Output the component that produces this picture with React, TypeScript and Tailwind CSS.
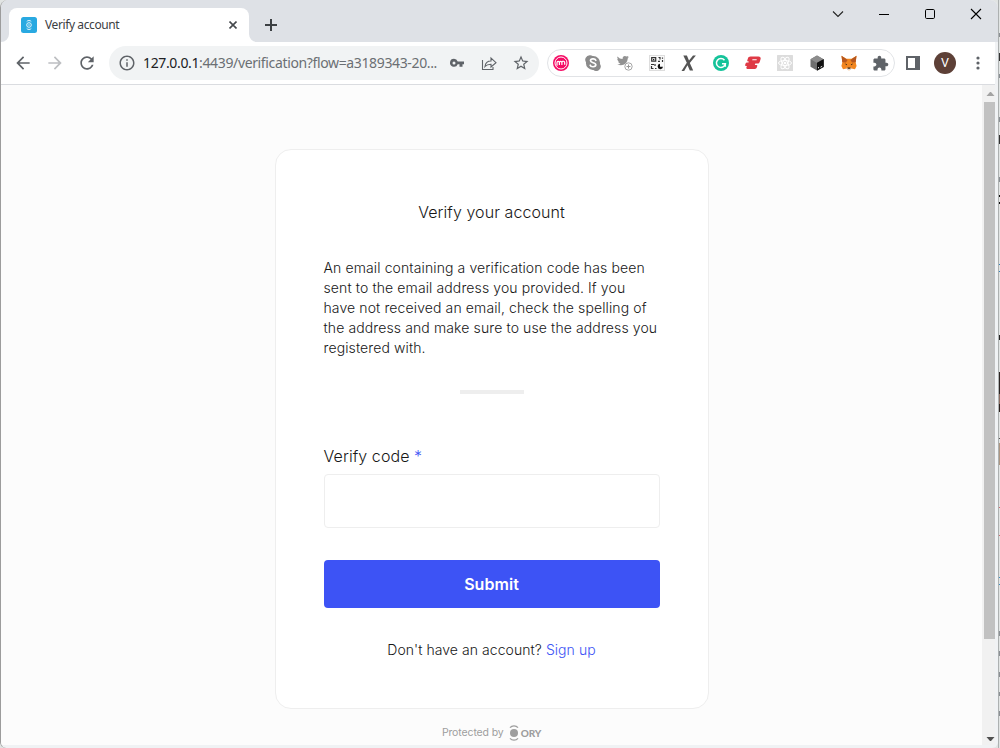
import React from "react";

const ui = "font-['Noto_Sans','Open_Sans',sans-serif]";

function Favicon() {
  return (
    <svg width="16" height="16" viewBox="0 0 16 16" className="shrink-0">
      <rect width="16" height="16" rx="2.5" fill="#29a9e1" />
      <g fill="none" stroke="#fff" strokeWidth="1" opacity=".9">
        <circle cx="8" cy="8" r="2.3" />
        <circle cx="8" cy="8" r="0.5" strokeWidth="0.6" />
        <path d="M5.700 4.600a2.600 2 0 0 1 4.600 0M5.700 11.400a2.600 2 0 0 0 4.600 0" />
      </g>
    </svg>
  );
}

function TitleBar() {
  return (
    <div className="flex h-[42px] shrink-0 bg-[#dee1e6] pl-2">
      <div className="flex w-60 flex-col pt-2">
        <div className="relative flex h-[34px] items-center rounded-t-lg bg-white pl-3">
          <svg width="8" height="8" viewBox="0 0 8 8" className="absolute -left-2 bottom-0">
            <path d="M8 0v8H0a8 8 0 0 0 8-8z" fill="#fff" />
          </svg>
          <svg width="8" height="8" viewBox="0 0 8 8" className="absolute -right-2 bottom-0">
            <path d="M0 0v8h8a8 8 0 0 1-8-8z" fill="#fff" />
          </svg>
          <Favicon />
          <span className={`${ui} ml-2 w-[180px] text-[12px] leading-4 tracking-[-0.4px] text-[#3c4043]`}>
            Verify account
          </span>
          <svg width="8" height="8" viewBox="0 0 8 8" className="ml-1">
            <path d="M0.500 0.500l7 7M7.500 0.500l-7 7" stroke="#45494d" strokeWidth="1.600" />
          </svg>
        </div>
      </div>
      <div className="flex flex-1 pt-[19px] pl-4">
        <svg width="12" height="12" viewBox="0 0 12 12">
          <path d="M6 0v12M0 6h12" stroke="#3c4043" strokeWidth="2" />
        </svg>
      </div>
      <div className="flex gap-[34px] pt-2 pr-4">
        <svg width="12" height="12" viewBox="0 0 12 12" fill="none" stroke="#222" strokeWidth="1.100">
          <path d="M1 3.500l5 5 5-5" />
        </svg>
        <svg width="12" height="12" viewBox="0 0 12 12" shapeRendering="crispEdges">
          <path d="M1 6.500h10" stroke="#000" />
        </svg>
        <svg width="12" height="12" viewBox="0 0 12 12" fill="none" stroke="#000">
          <rect x="1.500" y="1.500" width="9" height="9" rx="1.200" />
        </svg>
        <svg width="12" height="12" viewBox="0 0 12 12" stroke="#000" strokeWidth="1.100">
          <path d="M1 1l10 10M11 1L1 11" />
        </svg>
      </div>
    </div>
  );
}

function MIcon({ d, color = "#5f6368", size = 20 }: { d: string; color?: string; size?: number }) {
  return (
    <svg width={size} height={size} viewBox="0 0 24 24" fill={color} className="shrink-0">
      <path d={d} />
    </svg>
  );
}

function AddressBar() {
  return (
    <div className="flex h-[34px] w-[430px] items-center rounded-full bg-[#f1f3f4] pl-[9px]">
      <MIcon
        size={18}
        d="M11 7h2v2h-2zm0 4h2v6h-2zm1-9C6.480 2 2 6.480 2 12s4.480 10 10 10 10-4.480 10-10S17.520 2 12 2zm0 18c-4.410 0-8-3.590-8-8s3.590-8 8-8 8 3.590 8 8-3.590 8-8 8z"
      />
      <span className={`${ui} ml-[7px] w-[304px] whitespace-nowrap text-[14px] leading-5 tracking-[-0.36px] text-[#6b6f73]`}>
        <span className="text-[#202124]">127.0.0.1</span>
        :4439/verification?flow=a3189343-20...
      </span>
      <svg width="16" height="16" viewBox="0 0 16 16" fill="#5f6368" className="mt-[-1px] ml-[2px] shrink-0">
        <path fillRule="evenodd" d="M5 3.800a4 4 0 1 0 3.700 5.500H10.500v2.400h3V9.300H15V6.500H8.700A4 4 0 0 0 5 3.800zm0 2.600a1.500 1.500 0 1 1 0 3 1.500 1.500 0 0 1 0-3z" />
      </svg>
      <svg width="16" height="16" viewBox="0 0 16 16" fill="none" stroke="#5f6368" className="ml-4 shrink-0">
        <path d="M1.500 5v9.500h10.500V12M4 11.500c.5-4 2.500-5.500 6-5.500V3l5 4.700-5 4.300V9.200c-3 0-4.700.7-6 2.300z" strokeWidth="1.100" />
      </svg>
      <div className="ml-[15px]">
        <MIcon
          size={18}
          d="M22 9.240l-7.190-.62L12 2 9.190 8.630 2 9.240l5.460 4.730L5.820 21 12 17.270 18.180 21l-1.630-7.030L22 9.240zM12 15.400l-3.760 2.270 1-4.280-3.320-2.880 4.380-.38L12 6.100l1.710 4.040 4.380.38-3.320 2.880 1 4.280L12 15.400z"
        />
      </div>
    </div>
  );
}

function Extensions() {
  return (
    <div className="flex h-7 w-[348px] items-center gap-4 rounded-full border border-[#e1e3e6] pl-[5px]">
      <svg width="16" height="16" viewBox="0 0 16 16" className="shrink-0">
        <circle cx="8" cy="8" r="8" fill="#f50b64" />
        <circle cx="8" cy="8" r="6" fill="none" stroke="#fff" strokeWidth="1" />
        <path d="M4 10.800V7.800c0-2 2.400-2 2.400 0V10M6.400 7.800c0-2 2.500-2 2.500 0V10M8.900 7.800c0-2.200 2.800-2 2.800 0v2" fill="none" stroke="#fff" strokeWidth="1.200" />
      </svg>
      <svg width="16" height="16" viewBox="0 0 16 16" className="shrink-0">
        <path d="M4.600 0.200a4.500 4.500 0 0 1 3.100.8A7 7 0 0 1 15 9a4.500 4.500 0 0 1-6.500 6A7 7 0 0 1 1 7.200 4.500 4.500 0 0 1 4.600.2z" fill="#8b8b8b" />
        <path d="M10.800 5.300C10 3.300 5.500 3.500 5.500 5.800c0 2.400 5.300 1.500 5.300 4 0 2.500-5 2.500-5.600.4" fill="none" stroke="#fff" strokeWidth="1.700" strokeLinecap="round" />
      </svg>
      <svg width="16" height="16" viewBox="0 0 16 16" className="shrink-0">
        <path d="M.5 1.500C2 3.200 3.500 4 5.600 4 5.300 1 8 .2 9.600 1.600l1.900-.6-.8 1.500 1.200-.2-1.200 1.300C10.500 9 5 12 .2 9.300c1.400.1 2.500-.2 3.300-.9C2.200 8.200 1.400 7.400 1.100 6.400h1C.8 5.800.2 4.800.3 3.700l1 .3C.3 3.200 0 2.500.5 1.500z" fill="#929292" />
        <circle cx="11.500" cy="11.500" r="3.700" fill="#fff" stroke="#a5a5a5" />
        <path d="M11.500 9.500v4M9.500 11.500h4" stroke="#999" />
      </svg>
      <svg width="16" height="16" viewBox="0 0 16 16" className="shrink-0">
        <rect x=".5" y=".5" width="15" height="15" fill="#fafafa" stroke="#ddd" />
        <path d="M2.700 2.700h4v3.500h-4zM9.500 2.500h1.500v2M13.500 2.500v1.200M9 6.300h2M13.500 5v2M2 9.500h3M6 9v2M2.500 11v2.500h2M6 13.500h1.500" fill="none" stroke="#333" strokeWidth="1.200" />
        <path d="M4 4h1.300v1.200H4z" fill="#222" />
        <path d="M11 8.800v3h3a2.700 2.700 0 1 1-3-3z" fill="#111" />
      </svg>
      <svg width="16" height="16" viewBox="0 0 16 16" className="shrink-0">
        <path d="M2.300.5h3.600l2.100 5L12 .5h2.900L8.800 8l3.400 7.500H8.800l-2.300-5.200L3.200 16H.5l5.300-8.300z" fill="#555" />
      </svg>
      <svg width="16" height="16" viewBox="0 0 16 16" className="shrink-0">
        <circle cx="8" cy="8" r="8" fill="#15c39a" />
        <path d="M11.500 5.200A4.500 4.500 0 1 0 12.400 8.700H9M12.300 8.700v3" fill="none" stroke="#fff" strokeWidth="1.500" />
      </svg>
      <svg width="16" height="16" viewBox="0 0 16 16" className="shrink-0">
        <path
          fillRule="evenodd"
          d="M5.500 1.500H13.500c1.600 0 2.500 1.200 2.100 2.600l-.8 2.600c-.4 1.200-1.300 1.900-2.500 1.900h-2l-.5 1.300h1.700c.7 0 1 .5.800 1.100l-.5 1.500c-.3.900-1 1.400-1.900 1.400H2.300c-.8 0-1.200-.5-1-1.200l.6-1.700H1c-.7 0-1.100-.5-.9-1.100l.5-1.300c.2-.7.7-1 1.400-1h1.500l.4-1.100H3.200c-.8 0-1.100-.6-.9-1.200l.6-1.900c.4-1.200 1.300-1.900 2.600-1.900zM7.500 4.300l-.3 1h4.300l.3-1z"
          fill="#df3a46"
        />
      </svg>
      <svg width="16" height="16" viewBox="0 0 16 16" className="shrink-0">
        <rect width="16" height="16" rx=".5" fill="#dcdcdc" />
        <g fill="none" stroke="#fff">
          <ellipse cx="8" cy="8" rx="6.500" ry="2.500" />
          <ellipse cx="8" cy="8" rx="6.500" ry="2.500" transform="rotate(60 8 8)" />
          <ellipse cx="8" cy="8" rx="6.500" ry="2.500" transform="rotate(120 8 8)" />
        </g>
        <circle cx="8" cy="8" r="1.300" fill="#fff" />
      </svg>
      <svg width="16" height="16" viewBox="0 0 16 16" className="shrink-0">
        <path d="M8 .5l6.500 3.700v7.600L8 15.500l-6.500-3.700V4.200z" fill="#6f6f6f" />
        <path d="M8 .5l6.500 3.700L8 8 1.500 4.200z" fill="#8c8c8c" />
        <path d="M8 7.700l6.800-3.600v7.800L8 15.800z" fill="#101010" />
        <path d="M9.500 13.300V12M11.500 12.200l1.700-.9" stroke="#fff" strokeWidth=".9" />
      </svg>
      <svg width="16" height="16" viewBox="0 0 16 16" className="shrink-0">
        <path d="M.5.8l5 3h5l5-3-.8 6.700.9 3.500-1.600 3.200-3.500-.7-2.500 2-2.500-2-3.500.7L.4 11l.9-3.500z" fill="#f2861f" />
        <path d="M.5.8L6.600 5 5 7.500 1.300 7.300zM15.500.8L9.400 5 11 7.500l3.700-.2z" fill="#b6571f" />
        <path d="M5.500 12.500l2.500 1 2.500-1-.8 2.500H6.300z" fill="#e5d5c7" />
        <path d="M3.600 8.500l2.500.8-.4 1zM12.400 8.500l-2.500.8.4 1zM6.600 12.500h2.800v1.200H6.600z" fill="#362718" />
      </svg>
      <div className="ml-[-1px] shrink-0">
        <MIcon
          size={17}
          d="M20.500 11H19V7c0-1.100-.9-2-2-2h-4V3.500C13 2.120 11.880 1 10.500 1S8 2.120 8 3.500V5H4c-1.100 0-1.990.9-1.990 2v3.800H3.500c1.490 0 2.700 1.210 2.700 2.700s-1.210 2.700-2.700 2.700H2V20c0 1.100.9 2 2 2h3.800v-1.500c0-1.490 1.210-2.700 2.700-2.700 1.490 0 2.700 1.210 2.700 2.700V22H17c1.100 0 2-.9 2-2v-4h1.500c1.380 0 2.500-1.120 2.500-2.500S21.880 11 20.500 11z"
        />
      </div>
    </div>
  );
}

function Toolbar() {
  return (
    <div className="mr-[3px] flex h-[43px] shrink-0 items-center border-b border-[#dadce0] bg-white pl-3">
      <MIcon d="M20 11H7.830l5.590-5.590L12 4l-8 8 8 8 1.410-1.410L7.830 13H20v-2z" />
      <div className="ml-3 flex">
        <MIcon color="#bdbfc2" d="M12 4l-1.410 1.410L16.170 11H4v2h12.170l-5.580 5.590L12 20l8-8z" />
      </div>
      <div className="ml-3 flex">
        <MIcon d="M17.650 6.350C16.200 4.900 14.210 4 12 4c-4.420 0-7.990 3.580-7.990 8s3.570 8 7.990 8c3.730 0 6.840-2.550 7.730-6h-2.080c-.82 2.330-3.040 4-5.650 4-3.310 0-6-2.690-6-6s2.690-6 6-6c1.660 0 3.140.69 4.220 1.780L13 11h7V4l-2.350 2.350z" />
      </div>
      <div className="ml-3">
        <AddressBar />
      </div>
      <div className="ml-2">
        <Extensions />
      </div>
      <svg width="14" height="14" viewBox="0 0 14 14" className="ml-[11px] shrink-0">
        <path fillRule="evenodd" d="M0 0h14v14H0zM2 2v10h7V2z" fill="#5f6368" />
      </svg>
      <div className="ml-[14px] flex size-[22px] shrink-0 items-center justify-center rounded-full bg-[#5d4037] font-['Roboto',sans-serif] text-[12.5px] leading-none text-white">
        V
      </div>
      <svg width="4" height="14" viewBox="0 0 4 14" fill="#5f6368" className="ml-[19.500px] shrink-0">
        <circle cx="2" cy="2" r="1.600" />
        <circle cx="2" cy="7" r="1.600" />
        <circle cx="2" cy="12" r="1.600" />
      </svg>
    </div>
  );
}

function OryLogo() {
  return (
    <span className="flex items-center">
      <svg width="10" height="16" viewBox="0 0 10 16" fill="none" stroke="#9e9e9e">
        <circle cx="5" cy="8" r="4" fill="#9e9e9e" stroke="none" />
        <path d="M1 2.600C3 .2 7 .2 9 2.600M1 13.400c2 2.400 6 2.400 8 0" strokeWidth="1.300" />
      </svg>
      <span className="ml-[2px] font-['Lato',sans-serif] text-[10px] font-black leading-4 text-[#9e9e9e]">
        ORY
      </span>
    </span>
  );
}

function VerificationPage() {
  return (
    <main className="flex flex-1 flex-col items-center bg-[#fcfcfc] pt-16 font-['Inter',sans-serif] font-light text-[#171717]">
      <section className="flex h-[560px] w-[434px] flex-col rounded-2xl border border-[#eeeeee] bg-white px-12 pt-[50px]">
        <h1 className="text-center text-[16px] leading-6 tracking-[0.07px]">Verify your account</h1>
        <p className="mt-[34px] whitespace-nowrap text-[14px] leading-5 tracking-[0.115px]">
          An email containing a verification code has been
          <br />
          sent to the email address you provided. If you
          <br />
          have not received an email, check the spelling of
          <br />
          the address and make sure to use the address you
          <br />
          registered with.
        </p>
        <div className="mx-auto mt-8 h-1 w-16 bg-[#eeeeee]" />
        <label className="mt-[50px] text-[16px] leading-6 tracking-[0.08px]">
          Verify code <span className="text-[#3d53f5]">*</span>
        </label>
        <input className="mt-[6px] h-[54px] w-full rounded border border-[#eeeeee] bg-white outline-none" />
        <button className="mt-8 h-12 w-full shrink-0 rounded bg-[#3d53f5] text-[16px] font-semibold leading-6 tracking-[0.05px] text-white">
          Submit
        </button>
        <p className="mt-8 text-center text-[14px] leading-5 tracking-[0.06px]">
          Don't have an account? <span className="text-[#3d53f5]">Sign up</span>
        </p>
      </section>
      <div className="mt-4 flex h-4 items-center gap-[5px] text-[10.5px] font-normal leading-4 tracking-[-0.12px] text-[#9e9e9e]">
        <span>Protected by</span>
        <OryLogo />
      </div>
    </main>
  );
}

function Scrollbar() {
  return (
    <div className="flex w-[13px] flex-col items-end bg-[#f1f1f1]">
      <svg width="11" height="17" viewBox="0 0 11 17" fill="#a3a3a3">
        <path d="M2.500 11h8l-3.500-4H6z" />
      </svg>
      <div className="h-[537px] w-[11px] bg-[#c1c1c1]" />
      <div className="flex-1" />
      <svg width="11" height="14" viewBox="0 0 11 14" fill="#505050">
        <path d="M2.500 6h8L7 10H6z" />
      </svg>
    </div>
  );
}

const marks = [
  [33, 4, "#8a8f94"], [53, 8, "#333"], [74, 4, "#8a8f94"], [117, 5, "#8a8f94"], [135, 9, "#333"],
  [177, 5, "#8a8f94"], [195, 2, "#111"], [202, 2, "#111"], [264, 1, "#3182bd"], [271, 1, "#3182bd"],
  [335, 5, "#222"], [372, 22, "#2c2523"], [394, 10, "#8d6d61"], [404, 8, "#2b211e"], [438, 1, "#555"],
  [443, 22, "#ad9682"], [507, 1, "#d16b70"], [535, 1, "#d16b70"], [577, 1, "#3a8fc4"], [584, 1, "#3a8fc4"],
  [631, 5, "#8a8f94"], [651, 5, "#8a8f94"], [672, 5, "#8a8f94"], [692, 4, "#8a8f94"], [711, 5, "#8a8f94"],
] as const;

function BackgroundWindow() {
  return (
    <svg width="2" height="748" viewBox="0 0 2 748" className="shrink-0" shapeRendering="crispEdges">
      <rect width="2" height="748" fill="#e1e4e3" />
      {marks.map(([y, h, fill]) => (
        <rect key={y} x="1" y={y} width="1" height={h} fill={fill} />
      ))}
      <rect width="1" height="748" fill="#adb1b1" />
    </svg>
  );
}

export default function App() {
  return (
    <div className="flex h-[748px] w-[1000px] overflow-hidden bg-[#e1e4e3]">
      <div className="flex w-[998px] flex-col overflow-hidden rounded-t-lg rounded-b-md border-l border-[#9c9c9c] bg-[#f0f2f4]">
        <TitleBar />
        <Toolbar />
        <div className="flex h-[660px] pr-[3px]">
          <VerificationPage />
          <Scrollbar />
        </div>
      </div>
      <BackgroundWindow />
    </div>
  );
}
